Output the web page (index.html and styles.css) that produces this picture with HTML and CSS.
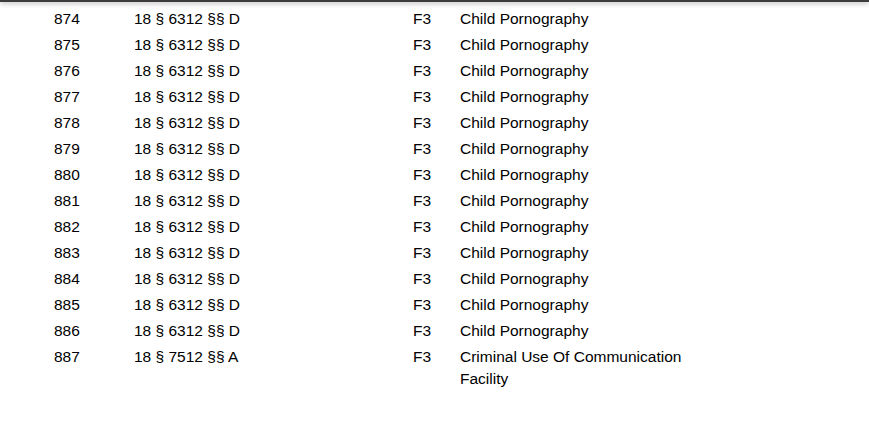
FILE: index.html
```html
<!DOCTYPE html>
<html>
<head>
<meta charset="utf-8">
<link rel="stylesheet" href="styles.css">
</head>
<body>
<div class="topbar"></div>
<div class="page">
  <div class="row"><div class="c-no">873</div><div class="c-code">18 § 6312 §§ D</div><div class="c-grade">F3</div><div class="c-desc">Child Pornography</div></div>
  <div class="row"><div class="c-no">874</div><div class="c-code">18 § 6312 §§ D</div><div class="c-grade">F3</div><div class="c-desc">Child Pornography</div></div>
  <div class="row"><div class="c-no">875</div><div class="c-code">18 § 6312 §§ D</div><div class="c-grade">F3</div><div class="c-desc">Child Pornography</div></div>
  <div class="row"><div class="c-no">876</div><div class="c-code">18 § 6312 §§ D</div><div class="c-grade">F3</div><div class="c-desc">Child Pornography</div></div>
  <div class="row"><div class="c-no">877</div><div class="c-code">18 § 6312 §§ D</div><div class="c-grade">F3</div><div class="c-desc">Child Pornography</div></div>
  <div class="row"><div class="c-no">878</div><div class="c-code">18 § 6312 §§ D</div><div class="c-grade">F3</div><div class="c-desc">Child Pornography</div></div>
  <div class="row"><div class="c-no">879</div><div class="c-code">18 § 6312 §§ D</div><div class="c-grade">F3</div><div class="c-desc">Child Pornography</div></div>
  <div class="row"><div class="c-no">880</div><div class="c-code">18 § 6312 §§ D</div><div class="c-grade">F3</div><div class="c-desc">Child Pornography</div></div>
  <div class="row"><div class="c-no">881</div><div class="c-code">18 § 6312 §§ D</div><div class="c-grade">F3</div><div class="c-desc">Child Pornography</div></div>
  <div class="row"><div class="c-no">882</div><div class="c-code">18 § 6312 §§ D</div><div class="c-grade">F3</div><div class="c-desc">Child Pornography</div></div>
  <div class="row"><div class="c-no">883</div><div class="c-code">18 § 6312 §§ D</div><div class="c-grade">F3</div><div class="c-desc">Child Pornography</div></div>
  <div class="row"><div class="c-no">884</div><div class="c-code">18 § 6312 §§ D</div><div class="c-grade">F3</div><div class="c-desc">Child Pornography</div></div>
  <div class="row"><div class="c-no">885</div><div class="c-code">18 § 6312 §§ D</div><div class="c-grade">F3</div><div class="c-desc">Child Pornography</div></div>
  <div class="row"><div class="c-no">886</div><div class="c-code">18 § 6312 §§ D</div><div class="c-grade">F3</div><div class="c-desc">Child Pornography</div></div>
  <div class="row"><div class="c-no">887</div><div class="c-code">18 § 7512 §§ A</div><div class="c-grade">F3</div><div class="c-desc">Criminal Use Of Communication Facility</div></div>
</div>
</body>
</html>
```
FILE: styles.css
```css
html, body {
  margin: 0;
  padding: 0;
  background: #ffffff;
  overflow: hidden;
}
body {
  font-family: "Liberation Sans", Arial, sans-serif;
  font-size: 15.5px;
  color: #000;
}
.topbar {
  position: fixed;
  top: 0;
  left: 0;
  right: 0;
  height: 2px;
  background: #3c3c3c;
  box-shadow: 0 1px 5px rgba(0, 0, 0, 0.45);
}
.page {
  margin-top: -20px;
  padding-left: 54px;
}
.row {
  display: grid;
  grid-template-columns: 80px 279px 47px 240px;
  line-height: 22px;
  padding-top: 2px;
  padding-bottom: 2px;
}
```
